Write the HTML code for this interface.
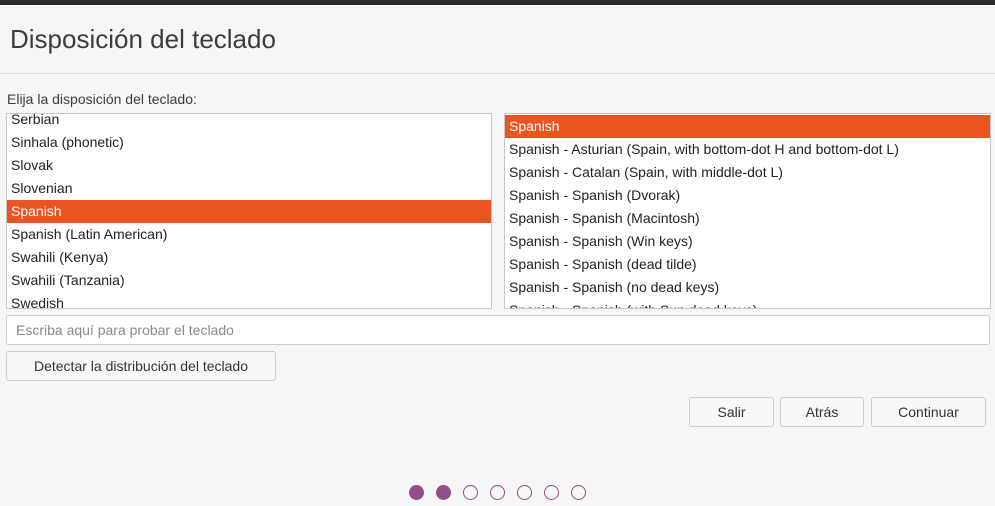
<!DOCTYPE html>
<html><head><meta charset="utf-8"><style>
*{box-sizing:border-box;margin:0;padding:0}
body{width:995px;height:506px;background:#f6f6f6;font-family:"Liberation Sans",sans-serif;color:#3c3c3c;position:relative;overflow:hidden;font-size:14px}
.top{position:absolute;left:0;top:0;width:995px;height:5px;background:#2c2c2c}
h1{position:absolute;left:10px;top:24px;font-size:26px;font-weight:normal;color:#3c3c3c}
.sep{position:absolute;left:0;top:73px;width:995px;height:1px;background:#dcdcdc}
.lbl{position:absolute;left:7px;top:91px;font-size:14px}
.list{position:absolute;background:#fff;border:1px solid #c8c8c8;overflow:hidden}
.list .w{padding:0}
.list .r{height:23px;line-height:23px;padding-left:4px;color:#222;white-space:nowrap}
.list .sel{background:#e95420;color:#fff}
.inp{position:absolute;left:6px;top:315px;width:984px;height:30px;background:#fff;border:1px solid #cdcdcd;border-radius:3px;padding-left:9px;line-height:28px;color:#8a8a8a}
.btn{position:absolute;height:30px;border:1px solid #cdcdcd;border-radius:3px;background:#f8f8f8;text-align:center;line-height:28px;color:#333}
.dot{position:absolute;top:485px;width:15px;height:15px;border-radius:50%;border:1.5px solid #924d8b}
.dot.f{background:#924d8b}
</style></head><body>
<div class="top"></div>
<h1>Disposición del teclado</h1>
<div class="sep"></div>
<div class="lbl">Elija la disposición del teclado:</div>
<div class="list" style="left:6px;top:113px;width:486px;height:196px"><div class="w" style="margin-top:-6px">
<div class="r">Serbian</div><div class="r">Sinhala (phonetic)</div><div class="r">Slovak</div><div class="r">Slovenian</div><div class="r sel">Spanish</div><div class="r">Spanish (Latin American)</div><div class="r">Swahili (Kenya)</div><div class="r">Swahili (Tanzania)</div><div class="r">Swedish</div></div></div>
<div class="list" style="left:504px;top:113px;width:487px;height:196px"><div class="w" style="margin-top:1px">
<div class="r sel">Spanish</div><div class="r">Spanish - Asturian (Spain, with bottom-dot H and bottom-dot L)</div><div class="r">Spanish - Catalan (Spain, with middle-dot L)</div><div class="r">Spanish - Spanish (Dvorak)</div><div class="r">Spanish - Spanish (Macintosh)</div><div class="r">Spanish - Spanish (Win keys)</div><div class="r">Spanish - Spanish (dead tilde)</div><div class="r">Spanish - Spanish (no dead keys)</div><div class="r">Spanish - Spanish (with Sun dead keys)</div></div></div>
<div class="inp">Escriba aquí para probar el teclado</div>
<div class="btn" style="left:6px;top:351px;width:270px">Detectar la distribución del teclado</div>
<div class="btn" style="left:689px;top:397px;width:85px">Salir</div>
<div class="btn" style="left:780px;top:397px;width:84px">Atrás</div>
<div class="btn" style="left:871px;top:397px;width:115px">Continuar</div>
<div class="dot f" style="left:409px"></div>
<div class="dot f" style="left:436px"></div>
<div class="dot" style="left:463px"></div>
<div class="dot" style="left:490px"></div>
<div class="dot" style="left:517px"></div>
<div class="dot" style="left:544px"></div>
<div class="dot" style="left:571px"></div>
</body></html>
